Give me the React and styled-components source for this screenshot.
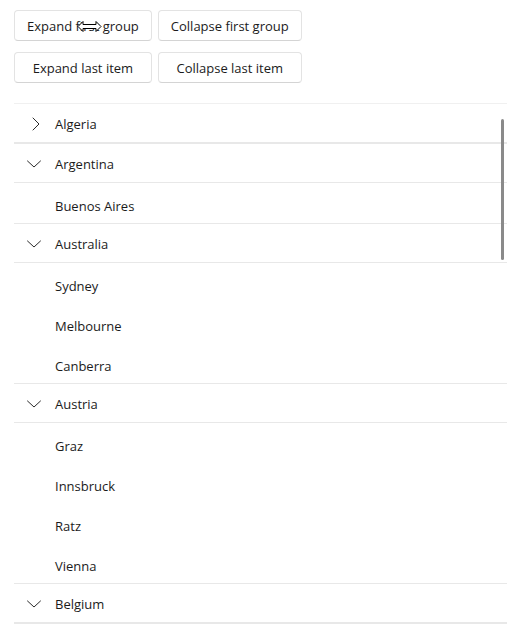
import React from "react";
import styled, { createGlobalStyle } from "styled-components";

const Global = createGlobalStyle`
  html, body { margin: 0; padding: 0; background: #ffffff; }
  body { font-family: "Open Sans", "Noto Sans", sans-serif; color: #1b1b1b; }
  * { box-sizing: border-box; }
`;

const Page = styled.div`
  position: relative;
  width: 519px;
  height: 634px;
  overflow: hidden;
  padding: 10px 12px 0 14px;
  display: flex;
  flex-direction: column;
  gap: 20px;
`;

const Toolbar = styled.div`
  display: grid;
  grid-template-columns: auto auto;
  justify-content: start;
  column-gap: 6px;
  row-gap: 11px;
`;

const Button = styled.button`
  height: 31px;
  padding: 0 12px;
  background: #ffffff;
  border: 1px solid #e3e3e3;
  border-bottom-color: #d4d4d4;
  border-radius: 4px;
  font-family: "Open Sans", "Noto Sans", sans-serif;
  font-size: 13px;
  color: #1b1b1b;
  white-space: nowrap;
`;

const List = styled.div`
  position: relative;
  flex: 1;
  overflow: hidden;
  border-top: 1px solid #f0f0f0;
`;

const Group = styled.div`
  border-bottom: 1px solid #e8e8e8;
`;

const Header = styled.div`
  height: 39px;
  display: flex;
  align-items: center;
  gap: 13px;
  padding: 2px 0 0 12px;
  border-bottom: 1px solid #e8e8e8;
  font-size: 13px;
`;

const Item = styled.div`
  height: 40px;
  display: flex;
  align-items: center;
  padding: 6px 0 0 41px;
  font-size: 13px;
`;

const Thumb = styled.div`
  position: absolute;
  right: 3px;
  top: 15px;
  width: 3px;
  height: 141px;
  border-radius: 2px;
  background: #8a8a8a;
`;

const Cursor = styled.svg`
  position: absolute;
  left: 77px;
  top: 20px;
  pointer-events: none;
`;

const Chevron = ({ open }) => (
  <svg width="16" height="16" viewBox="0 0 16 16" fill="none" stroke="#2b2b2b" strokeWidth="1" strokeLinecap="round" strokeLinejoin="round">
    {open ? <path d="M1.5 5 L8 11 L14.5 5" /> : <path d="M7 2 L13 8 L7 14" />}
  </svg>
);

const data = [
  { name: "Algeria", open: false, items: [] },
  { name: "Argentina", open: true, items: ["Buenos Aires"] },
  { name: "Australia", open: true, items: ["Sydney", "Melbourne", "Canberra"] },
  { name: "Austria", open: true, items: ["Graz", "Innsbruck", "Ratz", "Vienna"] },
  { name: "Belgium", open: true, items: [] },
];

export default function App() {
  return (
    <>
      <Global />
      <Page>
        <Toolbar>
          <Button>Expand first group</Button>
          <Button>Collapse first group</Button>
          <Button>Expand last item</Button>
          <Button>Collapse last item</Button>
        </Toolbar>
        <List>
          {data.map((g) => (
            <Group key={g.name}>
              <Header>
                <Chevron open={g.open} />
                <span>{g.name}</span>
              </Header>
              {g.open && g.items.map((it) => <Item key={it}>{it}</Item>)}
            </Group>
          ))}
          <Thumb />
        </List>
        <Cursor width="25" height="13" viewBox="0 0 25 13">
          <path d="M1 6.5 L6 1.5 L6 4.5 L19 4.5 L19 1.5 L24 6.5 L19 11.5 L19 8.5 L6 8.5 L6 11.5 Z" fill="#ffffff" stroke="#000000" strokeWidth="1" strokeLinejoin="miter" />
        </Cursor>
      </Page>
    </>
  );
}
